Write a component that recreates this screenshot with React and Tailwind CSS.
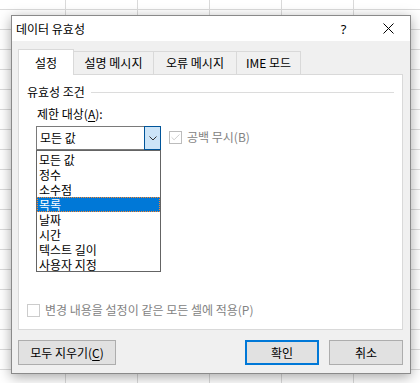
import { Check } from "lucide-react";

const listItems = ["모든 값", "정수", "소수점", "목록", "날짜", "시간", "텍스트 길이", "사용자 지정"];

const tabs = [
  { id: "settings", label: "설정", width: "w-[80px]" },
  { id: "input", label: "설명 메시지", width: "w-[80px]" },
  { id: "error", label: "오류 메시지", width: "w-[83px]" },
  { id: "ime", label: "IME 모드", width: "w-[64px]" },
];

const DataValidation = () => {
  return (
    <div className="w-[420px] h-[383px] overflow-hidden pl-[11px] pt-[15px] bg-white bg-[linear-gradient(to_right,#dadada_1px,transparent_1px),linear-gradient(to_bottom,#dadada_1px,transparent_1px)] bg-[size:72px_20px] bg-[position:65px_9px] font-['Noto_Sans_CJK_KR','Noto_Sans',sans-serif] text-[12px] text-black">
      <div className="w-[400px] h-[359px] flex flex-col border border-[#8a8a8a] bg-[#f0f0f0] shadow-[0_3px_12px_rgba(0,0,0,0.35)]">
        {/* Title bar */}
        <div className="h-[25px] bg-white flex items-center pl-[4px]">
          <span className="leading-[16px]">데이터 유효성</span>
          <div className="ml-auto w-[45px] flex justify-center">
            <span className="font-['Noto_Sans',sans-serif] text-[13px] leading-[16px]">?</span>
          </div>
          <div className="w-[44px] flex justify-center">
            <svg width="11" height="11" viewBox="0 0 11 11" fill="none" stroke="#000" strokeWidth="1">
              <path d="M0.5 0.5 L10.5 10.5 M10.5 0.5 L0.5 10.5" />
            </svg>
          </div>
        </div>

        {/* Body */}
        <div className="flex-1 flex flex-col pt-[8px] pl-[6px] pr-[7px] pb-[8px]">
          {/* Tabs */}
          <div className="h-[25px] flex items-end">
            {tabs.map((tab, i) =>
              i === 0 ? (
                <div
                  key={tab.id}
                  className="relative z-10 w-[56px] h-[26px] -mb-px bg-white border-l border-t border-r border-[#d9d9d9] flex items-center justify-center leading-[16px]"
                >
                  {tab.label}
                </div>
              ) : (
                <div
                  key={tab.id}
                  className={`${tab.width} h-[23px] bg-[#f0f0f0] border-t border-r border-[#d9d9d9] flex items-center justify-center leading-[16px]`}
                >
                  {tab.label}
                </div>
              )
            )}
          </div>

          {/* Panel */}
          <div className="h-[256px] bg-white border border-[#d9d9d9] flex flex-col pl-[8px] pr-[8px] pt-[9px] pb-[11px]">
            <div className="flex items-center h-[16px]">
              <span className="leading-[16px]">유효성 조건</span>
              <div className="flex-1 h-px bg-[#dcdcdc] ml-[6px]"></div>
            </div>

            <div className="mt-[6px] pl-[10px] leading-[16px]">
              제한 대상(<span className="underline underline-offset-2">A</span>):
            </div>

            <div className="mt-[4px] pl-[9px] flex items-start">
              {/* Combo box */}
              <div className="relative">
                <div className="w-[125px] h-[24px] border border-[#7a7a7a] flex items-center">
                  <span className="pl-[3px] flex-1 leading-[16px]">모든 값</span>
                  <div className="w-[17px] h-[24px] -my-px -mr-px border border-[#005499] bg-[#cce4f7] flex items-center justify-center">
                    <svg width="8" height="5" viewBox="0 0 8 5" fill="none" stroke="#333" strokeWidth="1">
                      <path d="M0.5 0.5 L4 4 L7.5 0.5" />
                    </svg>
                  </div>
                </div>

                {/* Dropdown list */}
                <div className="absolute left-0 top-full z-20 w-[125px] h-[122px] border border-[#646464] bg-white py-px">
                  {listItems.map((item, i) => (
                    <div
                      key={item}
                      className={
                        i === 3
                          ? "h-[15px] pl-[2px] leading-[15px] bg-[#0078d7] text-white outline-1 outline-dotted outline-[#ff8728] -outline-offset-1"
                          : "h-[15px] pl-[2px] leading-[15px]"
                      }
                    >
                      {item}
                    </div>
                  ))}
                </div>
              </div>

              {/* Ignore blank */}
              <div className="ml-[8px] mt-[3px] flex items-center text-[#838383]">
                <div className="w-[13px] h-[13px] border border-[#bcbcbc] bg-white flex items-center justify-center">
                  <Check size={11} strokeWidth={1.6} className="text-[#bcbcbc]" />
                </div>
                <span className="ml-[5px] leading-[16px]">공백 무시(B)</span>
              </div>
            </div>

            {/* Apply to all */}
            <div className="mt-auto flex items-center text-[#838383]">
              <div className="w-[13px] h-[13px] border border-[#cccccc] bg-white"></div>
              <span className="ml-[5px] leading-[16px]">변경 내용을 설정이 같은 모든 셀에 적용(P)</span>
            </div>
          </div>

          {/* Buttons */}
          <div className="mt-[10px] flex items-center">
            <button className="w-[98px] h-[25px] bg-[#e1e1e1] border border-[#adadad] leading-[16px]">
              모두 지우기(<span className="underline underline-offset-2">C</span>)
            </button>
            <div className="ml-auto flex gap-[10px]">
              <button className="w-[74px] h-[25px] bg-[#e1e1e1] border-2 border-[#0078d7] leading-[16px]">
                확인
              </button>
              <button className="w-[74px] h-[25px] bg-[#e1e1e1] border border-[#adadad] leading-[16px]">
                취소
              </button>
            </div>
          </div>
        </div>
      </div>
    </div>
  );
};

export default DataValidation;
